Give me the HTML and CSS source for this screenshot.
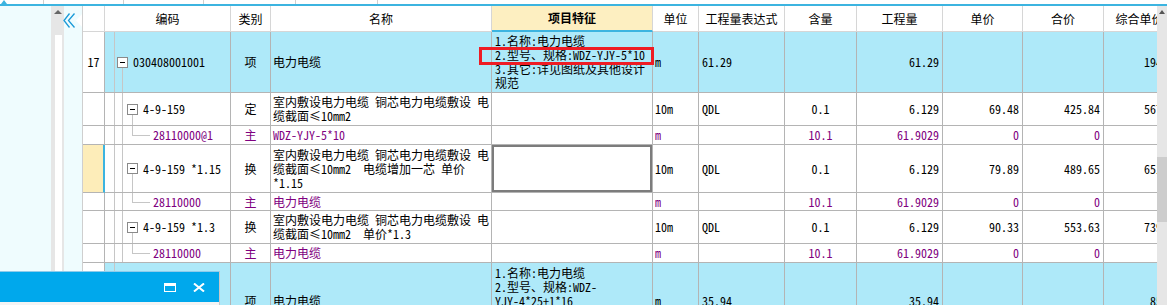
FILE: index.html
```html
<!DOCTYPE html>
<html lang="zh-CN">
<head>
<meta charset="utf-8">
<title>清单定额</title>
<link rel="stylesheet" href="styles.css">
</head>
<body>
<div class="screen">
  <div class="topstrip">
    <div class="seg s1"><span class="toptri"></span></div>
    <div class="seg s2"></div>
    <div class="seg s3"></div>
    <div class="seg s4"></div>
    <div class="seg s5"></div>
    <div class="seg s6"></div>
  </div>
  <div class="main">
    <aside class="side">
      <div class="side-fill"></div>
      <div class="side-scroll"><span class="sarrow"></span><div class="sthumb"></div></div>
      <div class="collapse">
        <svg width="19" height="16" viewBox="0 0 19 16">
          <polyline points="6.5,0.5 1,7.5 6.5,14.5" fill="none" stroke="#1a9ad8" stroke-width="1.3"/>
          <polyline points="11.5,0.5 5.5,7.5 11.5,14.5" fill="none" stroke="#1a9ad8" stroke-width="1.3"/>
          <polygon points="13,7.5 19,1 19,14" fill="#ffffff"/>
        </svg>
      </div>
    </aside>
    <div class="gridwrap">
      <div class="grid">
        <div class="row head">
          <div class="c"><span></span></div>
          <div class="c"><span>编码</span></div>
          <div class="c"><span>类别</span></div>
          <div class="c"><span>名称</span></div>
          <div class="c hsel"><span>项目特征</span></div>
          <div class="c"><span>单位</span></div>
          <div class="c"><span>工程量表达式</span></div>
          <div class="c"><span>含量</span></div>
          <div class="c"><span>工程量</span></div>
          <div class="c"><span>单价</span></div>
          <div class="c"><span>合价</span></div>
          <div class="c hlast"><span>综合单价</span></div>
        </div>

        <div class="row blue h61">
          <div class="c ctr"><span>17</span></div>
          <div class="c code lv1"><i class="g0"></i><i class="g1 from-box"></i><span class="box"></span><span>030408001001</span></div>
          <div class="c ctr"><span>项</span></div>
          <div class="c"><span>电力电缆</span></div>
          <div class="c p3"><span>1.名称:电力电缆<br>2.型号、规格:WDZ-YJY-5*10<br>3.其它:详见图纸及其他设计<br>规范</span></div>
          <div class="c"><span>m</span></div>
          <div class="c p3"><span>61.29</span></div>
          <div class="c"></div>
          <div class="c rt"><span>61.29</span></div>
          <div class="c"></div>
          <div class="c"></div>
          <div class="c rt"><span>194.85</span></div>
        </div>

        <div class="row h33">
          <div class="c"></div>
          <div class="c code lv2"><i class="g0"></i><i class="g1"></i><i class="cv"></i><span class="box"></span><span>4-9-159</span></div>
          <div class="c ctr"><span>定</span></div>
          <div class="c"><span>室内敷设电力电缆 铜芯电力电缆敷设 电<br>缆截面≤10mm2</span></div>
          <div class="c"></div>
          <div class="c"><span>10m</span></div>
          <div class="c p3"><span>QDL</span></div>
          <div class="c ctr"><span>0.1</span></div>
          <div class="c rt"><span>6.129</span></div>
          <div class="c rt"><span>69.48</span></div>
          <div class="c rt"><span>425.84</span></div>
          <div class="c rt"><span>567.18</span></div>
        </div>

        <div class="row pur h19">
          <div class="c"></div>
          <div class="c code lv3"><i class="g0"></i><i class="g1"></i><i class="cvu"></i><i class="ch"></i><span>28110000@1</span></div>
          <div class="c ctr"><span>主</span></div>
          <div class="c"><span>WDZ-YJY-5*10</span></div>
          <div class="c"></div>
          <div class="c"><span>m</span></div>
          <div class="c"></div>
          <div class="c ctr"><span>10.1</span></div>
          <div class="c rt"><span>61.9029</span></div>
          <div class="c rt"><span>0</span></div>
          <div class="c rt"><span>0</span></div>
          <div class="c"></div>
        </div>

        <div class="row h48">
          <div class="c cur"></div>
          <div class="c code lv2"><i class="g0"></i><i class="g1"></i><i class="cv"></i><span class="box"></span><span>4-9-159 *1.15</span></div>
          <div class="c ctr"><span>换</span></div>
          <div class="c"><span>室内敷设电力电缆 铜芯电力电缆敷设 电<br>缆截面≤10mm2  电缆增加一芯 单价<br>*1.15</span></div>
          <div class="c sel"></div>
          <div class="c"><span>10m</span></div>
          <div class="c p3"><span>QDL</span></div>
          <div class="c ctr"><span>0.1</span></div>
          <div class="c rt"><span>6.129</span></div>
          <div class="c rt"><span>79.89</span></div>
          <div class="c rt"><span>489.65</span></div>
          <div class="c rt"><span>651.42</span></div>
        </div>

        <div class="row pur h18">
          <div class="c"></div>
          <div class="c code lv3"><i class="g0"></i><i class="g1"></i><i class="cvu"></i><i class="ch"></i><span>28110000</span></div>
          <div class="c ctr"><span>主</span></div>
          <div class="c"><span>电力电缆</span></div>
          <div class="c"></div>
          <div class="c"><span>m</span></div>
          <div class="c"></div>
          <div class="c ctr"><span>10.1</span></div>
          <div class="c rt"><span>61.9029</span></div>
          <div class="c rt"><span>0</span></div>
          <div class="c rt"><span>0</span></div>
          <div class="c"></div>
        </div>

        <div class="row h33">
          <div class="c"></div>
          <div class="c code lv2"><i class="g0"></i><i class="g1"></i><i class="cv"></i><span class="box"></span><span>4-9-159 *1.3</span></div>
          <div class="c ctr"><span>换</span></div>
          <div class="c"><span>室内敷设电力电缆 铜芯电力电缆敷设 电<br>缆截面≤10mm2  单价*1.3</span></div>
          <div class="c"></div>
          <div class="c"><span>10m</span></div>
          <div class="c p3"><span>QDL</span></div>
          <div class="c ctr"><span>0.1</span></div>
          <div class="c rt"><span>6.129</span></div>
          <div class="c rt"><span>90.33</span></div>
          <div class="c rt"><span>553.63</span></div>
          <div class="c rt"><span>739.05</span></div>
        </div>

        <div class="row pur h19">
          <div class="c"></div>
          <div class="c code lv3"><i class="g0"></i><i class="g1"></i><i class="cvu"></i><i class="ch"></i><span>28110000</span></div>
          <div class="c ctr"><span>主</span></div>
          <div class="c"><span>电力电缆</span></div>
          <div class="c"></div>
          <div class="c"><span>m</span></div>
          <div class="c"></div>
          <div class="c ctr"><span>10.1</span></div>
          <div class="c rt"><span>61.9029</span></div>
          <div class="c rt"><span>0</span></div>
          <div class="c rt"><span>0</span></div>
          <div class="c"></div>
        </div>

        <div class="row blue h76">
          <div class="c ctr"><span>18</span></div>
          <div class="c code lv1"><i class="g0"></i><span class="box"></span><span>030408001002</span></div>
          <div class="c ctr"><span>项</span></div>
          <div class="c"><span>电力电缆</span></div>
          <div class="c p3"><span>1.名称:电力电缆<br>2.型号、规格:WDZ-<br>YJY-4*25+1*16<br>3.其它:详见图纸及其他设计<br>规范</span></div>
          <div class="c"><span>m</span></div>
          <div class="c p3"><span>35.94</span></div>
          <div class="c"></div>
          <div class="c rt"><span>35.94</span></div>
          <div class="c"></div>
          <div class="c"></div>
          <div class="c rt"><span>85.43</span></div>
        </div>
      </div>
    </div>
    <div class="vscroll"><span class="varrow"></span><div class="vthumb"></div></div>
  </div>

  <div class="redmark"></div>

  <div class="floatwin">
    <div class="wtitle">
      <svg class="wicon" width="12" height="9" viewBox="0 0 12 9">
        <rect x="0.5" y="0.5" width="11" height="8" fill="none" stroke="#fff" stroke-width="1"/>
        <rect x="0" y="0" width="12" height="3" fill="#fff"/>
      </svg>
      <svg class="wicon" width="12" height="9" viewBox="0 0 12 9">
        <line x1="1" y1="0.5" x2="11" y2="8.5" stroke="#fff" stroke-width="2"/>
        <line x1="11" y1="0.5" x2="1" y2="8.5" stroke="#fff" stroke-width="2"/>
      </svg>
    </div>
  </div>
</div>
</body>
</html>
```

FILE: styles.css
```css
* { box-sizing: border-box; margin: 0; padding: 0; }
html, body { width: 1167px; height: 305px; overflow: hidden; background: #fff; }
body {
  font-family: "Noto Sans Mono CJK SC", "Noto Sans CJK SC", monospace;
  font-size: 12px;
  line-height: 14px;
  color: #000;
}
.screen { position: relative; width: 1167px; height: 305px; overflow: hidden; }

/* top strip */
.topstrip { display: flex; height: 6px; border-bottom: 2px solid #3cb4e0; }
.seg { height: 4px; border-right: 1px solid #cfcfcf; position: relative; }
.s1 { width: 44px; }
.s2 { width: 80px; }
.s3 { width: 80px; }
.s4 { width: 92px; }
.s5 { width: 82px; }
.s6 { flex: 1; border-right: 0; }
.toptri {
  display: block; width: 0; height: 0; margin-left: 1px;
  border-left: 3px solid transparent; border-right: 3px solid transparent;
  border-bottom: 4px solid #3cb4e0;
}

.main { display: flex; height: 299px; }

/* left side panel */
.side { width: 82px; display: flex; background: #effcfe; flex: none; }
.side-fill { width: 51px; }
.side-scroll {
  width: 13px; background: #e6e6e6; display: flex; flex-direction: column;
  align-items: flex-start; padding-top: 4px;
}
.sarrow {
  width: 0; height: 0; margin-left: 3px;
  border-left: 4px solid transparent; border-right: 4px solid transparent;
  border-bottom: 4px solid #666;
}
.sthumb { width: 7px; margin-left: 4px; margin-top: 21px; flex: 1; background: #fff; }
.collapse { width: 18px; padding-top: 7px; }
.collapse svg { display: block; margin-left: -1px; }

/* grid */
.gridwrap { width: 1075px; flex: none; border-left: 1px solid #cfcfcf; overflow: hidden; }
.grid { width: 1101px; }
.row {
  display: grid;
  grid-template-columns: 22px 126px 40px 221px 161px 46px 86px 72px 86px 80px 81px 80px;
  height: 33px;
}
.head { height: 26px; }
.h61 { height: 61px; }
.h33 { height: 33px; }
.h19 { height: 19px; }
.h48 { height: 48px; }
.h18 { height: 18px; }
.h76 { height: 76px; }

.c {
  display: flex; align-items: center;
  padding: 0 2px;
  border-right: 1px solid #b4b4b4;
  border-bottom: 1px solid #b4b4b4;
  white-space: pre;
  overflow: hidden;
}
.c > span { display: block; }
.head .c { justify-content: center; border-color: #d6d6d6; background: #fff; }
.head .hsel { background: #fdefc1; font-weight: bold; border-bottom: 2px solid #3cb4e0; }
.head .hlast { padding-right: 10px; }
.ctr { justify-content: center; }
.rt { justify-content: flex-end; padding-right: 3px; }
.p3 { padding-left: 3px; }

.blue .c { background: #aee9f9; }
.blue .c:first-child { background: #fff; }
.pur .c { color: #800080; }
.cur { background: #fdedb9; border-right: 2px solid #3cb4e0; }
.sel { box-shadow: inset 0 0 0 2px #7c7c7c; }

/* tree column */
.code { position: relative; overflow: visible; }
.lv1 { padding-left: 12px; }
.lv2 { padding-left: 22px; }
.lv3 { padding-left: 48px; }
.code i { position: absolute; display: block; background: #c6c6c6; }
.g0 { left: 9px; top: 0; bottom: 0; width: 1px; }
.g1 { left: 17px; top: 0; bottom: 0; width: 1px; }
.g1.from-box { top: calc(50% + 5px); }
.cv { left: 27px; top: calc(50% + 5px); bottom: 0; width: 1px; }
.cvu { left: 27px; top: 0; height: 50%; width: 1px; }
.ch { left: 27px; top: 50%; width: 18px; height: 1px; }
.box {
  position: relative; flex: none;
  width: 11px; height: 11px; margin-right: 5px;
  border: 1px solid #8a8a8a; background: #fff;
}
.box::after {
  content: ""; position: absolute; left: 2px; top: 4px;
  width: 5px; height: 1px; background: #000;
}

/* right scrollbar */
.vscroll { width: 10px; flex: none; background: #e6e6e6; display: flex; flex-direction: column; padding-top: 4px; }
.varrow {
  width: 0; height: 0; margin-left: 2px;
  border-left: 3px solid transparent; border-right: 3px solid transparent;
  border-bottom: 4px solid #555;
}
.vthumb { height: 65px; margin-top: 143px; background: #cdcdcd; }

/* red annotation */
.redmark {
  position: absolute; left: 479px; top: 47px; width: 175px; height: 18px;
  border: 3px solid #ee1c24;
}

/* floating window */
.floatwin {
  position: absolute; left: 0; top: 271px; width: 220px; height: 34px;
  border-top: 1px solid #8fcbea; border-right: 1px solid #c8c8c8;
  background: #f4f4f4;
}
.wtitle {
  height: 30px; background: #00a8ec;
  display: flex; justify-content: flex-end; align-items: center;
  gap: 17px; padding-right: 14px;
}
.wicon { display: block; }
```
